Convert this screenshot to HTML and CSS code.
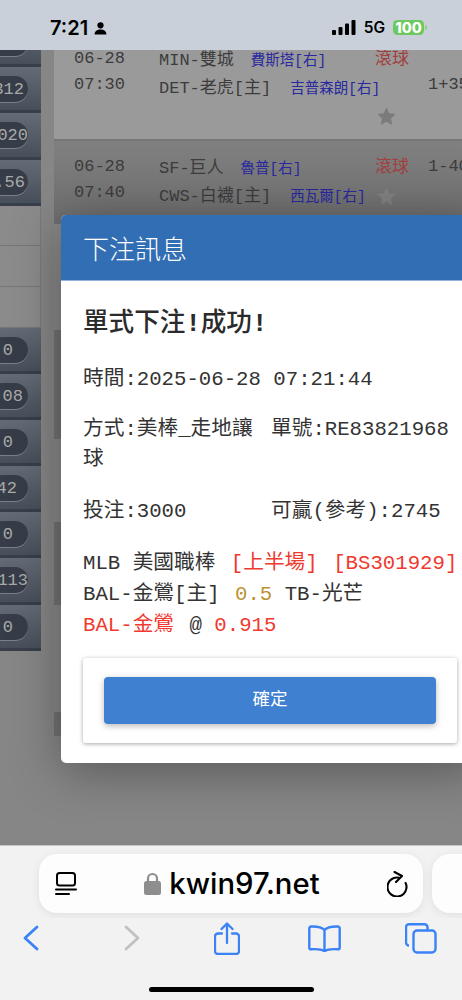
FILE: index.html
```html
<!DOCTYPE html>
<html lang="zh-Hant">
<head>
<meta charset="utf-8">
<title>下注訊息</title>
<link rel="stylesheet" href="styles.css">
</head>
<body>
<header class="status">
  <div class="clock">7:21
    <svg class="person" width="13" height="13" viewBox="0 0 13 13"><circle cx="6.5" cy="3.3" r="3.1"/><path d="M0.6 12.6c0-3.2 2.4-5 5.9-5s5.9 1.8 5.9 5z"/></svg>
  </div>
  <div class="indicators">
    <svg width="24" height="15" viewBox="0 0 24 15"><rect x="0" y="10" width="4" height="5" rx="1"/><rect x="6.500" y="7" width="4" height="8" rx="1"/><rect x="13" y="3.500" width="4" height="11.500" rx="1"/><rect x="19.500" y="0" width="4" height="15" rx="1"/></svg>
    <span class="net">5G</span>
    <span class="battery">100</span>
  </div>
</header>

<main class="screen">
  <aside class="side">
    <div class="cell"><span class="pill"></span></div>
    <div class="cell"><span class="pill e4">312</span></div>
    <div class="cell"><span class="pill">020</span></div>
    <div class="cell"><span class="pill e3">1.56</span></div>
    <div class="blank"></div>
    <div class="blank"></div>
    <div class="blank"></div>
    <div class="cell"><span class="pill e15">0</span></div>
    <div class="cell"><span class="pill e5">1.08</span></div>
    <div class="cell"><span class="pill e15">0</span></div>
    <div class="cell"><span class="pill e11">42</span></div>
    <div class="cell"><span class="pill e15">0</span></div>
    <div class="cell"><span class="pill">113</span></div>
    <div class="cell"><span class="pill e15">0</span></div>
  </aside>

  <section class="games">
    <article class="game first">
      <div class="when">06-28<br>07:30</div>
      <div class="teams">
        <div class="team">MIN-雙城<span class="pitcher p1">費斯塔[右]</span></div>
        <div class="team">DET-老虎[主]<span class="pitcher p2">吉普森朗[右]</span></div>
      </div>
      <div class="state">
        <div class="live">滾球</div>
        <svg class="star low" width="19" height="18" viewBox="0 0 24 23"><path d="M12 0.500l3.500 7.600 8.300 1-6.100 5.700 1.600 8.200-7.300-4.100-7.300 4.100 1.600-8.200L.2 9.100l8.300-1z"/></svg>
      </div>
      <div class="score second">1+35</div>
    </article>
    <article class="game second-game">
      <div class="when">06-28<br>07:40</div>
      <div class="teams">
        <div class="team">SF-巨人<span class="pitcher p3">魯普[右]</span></div>
        <div class="team">CWS-白襪[主]<span class="pitcher p2">西瓦爾[右]</span></div>
      </div>
      <div class="state">
        <div class="live">滾球</div>
        <svg class="star" width="19" height="18" viewBox="0 0 24 23"><path d="M12 0.500l3.500 7.600 8.300 1-6.100 5.700 1.600 8.200-7.300-4.100-7.300 4.100 1.600-8.200L.2 9.100l8.300-1z"/></svg>
      </div>
      <div class="score">1-40</div>
    </article>
    <div class="strip light h106"></div>
    <div class="strip dark h109"></div>
    <div class="strip light h83"></div>
    <div class="strip dark h83"></div>
    <div class="strip light h107"></div>
    <div class="strip dark h24"></div>
  </section>

  <div class="modal" role="dialog">
    <div class="modal-head">下注訊息</div>
    <div class="modal-body">
      <h2 class="result">單式下注<span class="bang">!</span>成功<span class="bang">!</span></h2>
      <p class="line gap-time">時間:2025-06-28 07:21:44</p>
      <div class="pair gap-way">
        <span>方式:美棒_走地讓球</span>
        <span>單號:RE83821968</span>
      </div>
      <div class="pair gap-bet">
        <span>投注:3000</span>
        <span>可贏(參考):2745</span>
      </div>
      <div class="slip">
        <div>MLB 美國職棒 <span class="red mark">[上半場]</span> <span class="red mark">[BS301929]</span></div>
        <div>BAL-金鶯[主] <span class="gold mark">0.5</span> TB-光芒</div>
        <div><span class="red">BAL-金鶯</span> <span class="mark">@</span> <span class="red">0.915</span></div>
      </div>
      <div class="actions"><button class="ok" type="button">確定</button></div>
    </div>
  </div>
</main>

<footer class="browser">
  <div class="tabs-row">
    <div class="url">
      <svg class="tablist" width="22" height="25" viewBox="0 0 22 25" fill="none" stroke="#000" stroke-width="2" stroke-linecap="round"><rect x="2" y="2" width="18" height="12.500" rx="2.500"/><path d="M1 18.500h20M1 23h13"/></svg>
      <div class="address">
        <svg width="17" height="23" viewBox="0 0 17 23"><path d="M4 10V6.500a4.500 4.500 0 0 1 9 0V10" fill="none" stroke="#8e8e8e" stroke-width="2.200"/><rect x="0" y="9" width="17" height="14" rx="2.500" fill="#8e8e8e"/></svg>
        <span class="host">kwin97.net</span>
      </div>
      <svg class="reload" width="22" height="26" viewBox="0 0 22 26" fill="none" stroke="#000" stroke-width="2.100" stroke-linecap="round" stroke-linejoin="round"><path d="M12 6.700A9.500 9.500 0 1 0 18.600 12"/><path d="M7.500 1L15 5l-6 6"/></svg>
    </div>
    <div class="url-next"></div>
  </div>
  <nav class="tools">
    <svg width="16" height="26" viewBox="0 0 16 26" fill="none" stroke="#3b82f6" stroke-width="2.800" stroke-linecap="round" stroke-linejoin="round"><path d="M14 2L2 13l12 11"/></svg>
    <svg class="fwd" width="16" height="26" viewBox="0 0 16 26" fill="none" stroke="#c0c0c0" stroke-width="2.800" stroke-linecap="round" stroke-linejoin="round"><path d="M2 2l12 11L2 24"/></svg>
    <svg class="nudge" width="26" height="33" viewBox="0 0 26 33" fill="none" stroke="#3b82f6" stroke-width="2.300" stroke-linecap="round" stroke-linejoin="round"><path d="M8 11.500H4a3 3 0 0 0-3 3V29a3 3 0 0 0 3 3h18a3 3 0 0 0 3-3V14.500a3 3 0 0 0-3-3h-4"/><path d="M13 21V2M7.500 7L13 1.500 18.500 7"/></svg>
    <svg class="nudge" width="33" height="27" viewBox="0 0 33 27" fill="none" stroke="#3b82f6" stroke-width="2.400" stroke-linecap="round" stroke-linejoin="round"><path d="M16.500 5C14 2.300 10 1.300 3.500 1.500 2 1.600 1.300 2.400 1.300 3.500V23c0 .8.700 1.400 1.600 1.300 6-.5 10.600-.2 13.600 2 3-2.200 7.600-2.500 13.600-2 .9.100 1.600-.5 1.600-1.300V3.500c0-1.100-.7-1.900-2.200-2C23 1.300 19 2.300 16.500 5zM16.500 5v21"/></svg>
    <svg width="32" height="31" viewBox="0 0 32 31" fill="none" stroke="#3b82f6" stroke-width="2.400" stroke-linejoin="round"><path d="M4 22.500a3 3 0 0 1-3-3V4.200a3 3 0 0 1 3-3h15.500a3 3 0 0 1 3 3V7"/><rect x="8.500" y="7.500" width="22" height="22" rx="3.500"/></svg>
  </nav>
  <div class="home"></div>
</footer>
</body>
</html>
```

FILE: styles.css
```css
* { box-sizing: border-box; }
html, body { margin: 0; padding: 0; }
body {
  width: 462px;
  height: 1000px;
  overflow: hidden;
  display: flex;
  flex-direction: column;
  background: #f2f2f2;
  font-family: "Liberation Mono", "Noto Sans CJK TC", monospace;
}

/* status bar */
.status {
  height: 50px;
  flex: none;
  display: flex;
  justify-content: space-between;
  background: #c9d0da;
  color: #000;
  padding: 18px 38px 0 50px;
  font-family: Inter, "Liberation Sans", sans-serif;
}
.clock { font-size: 20px; font-weight: 600; line-height: 20px; display: flex; gap: 6px; align-items: center; height: 20px; }
.person { margin-top: 1px; }
.indicators { display: flex; align-items: center; height: 18px; }
.net { font-size: 15.500px; font-weight: 600; margin: 0 8px; }
.battery {
  width: 31px;
  height: 15px;
  border-radius: 4.500px;
  background: #6dc95f;
  color: #fff;
  font-size: 14.500px;
  font-weight: 800;
  line-height: 15px;
  text-align: center;
  position: relative;
}
.battery::after {
  content: "";
  position: absolute;
  right: -3px;
  top: 5px;
  width: 2px;
  height: 5px;
  border-radius: 0 2px 2px 0;
  background: #86d67c;
}

/* dimmed page */
.screen {
  position: relative;
  height: 795px;
  flex: none;
  display: flex;
  overflow: hidden;
  background: #868686;
}
.side { width: 41px; flex: none; margin-top: -29px; }
.cell {
  height: 46.200px;
  padding-top: 9px;
  background: linear-gradient(#646b76, #474f5a);
  border-bottom: 3px solid #383f4a;
  overflow: hidden;
}
.pill {
  display: flex;
  justify-content: flex-end;
  width: 38px;
  height: 26px;
  margin-left: -10px;
  border-radius: 13px;
  background: #363d48;
  box-shadow: 0 1px 0 #79808a;
  color: #a9a9a9;
  font-size: 17px;
  line-height: 27px;
  white-space: nowrap;
}
.e3 { padding-right: 3px; }
.e4 { padding-right: 4px; }
.e5 { padding-right: 5px; }
.e11 { padding-right: 11px; }
.e15 { padding-right: 15px; }
.blank {
  height: 40.600px;
  background: #8b8b8b;
  border-bottom: 1px solid #767676;
  border-right: 1px solid #7a7a7a;
}

.games { margin-left: 13px; flex: 1; min-width: 0; margin-top: -5px; }
.game {
  display: grid;
  grid-template-columns: 85px 216px 53px 1fr;
  padding-left: 20px;
  color: #3c3c3c;
  font-size: 17px;
  line-height: 26px;
  white-space: nowrap;
  overflow: hidden;
}
.first { height: 96px; background: #9a9a9a; border-bottom: 2px solid #767676; }
.second-game { height: 83px; padding-top: 12px; background: linear-gradient(#808080, #6e6e6e); }
.when { padding-top: 1px; }
.teams { padding-top: 3px; }
.team { height: 27.500px; }
.pitcher { color: #28289f; font-size: 14.500px; }
.p1 { margin-left: 17px; }
.p2 { margin-left: 19px; }
.p3 { margin-left: 17px; }
.live { color: #a23f3f; font-size: 17px; padding-top: 2.500px; line-height: 24px; }
.star { display: block; fill: #808080; margin: 7px 0 0 2px; }
.star.low { fill: #7b7b7b; margin-top: 35.500px; }
.score { padding-top: 1px; }
.score.second { padding-top: 27px; }
.light { background: #888; }
.dark { background: #727272; }
.h106 { height: 106px; }
.h109 { height: 109px; }
.h83 { height: 83px; }
.h107 { height: 107px; }
.h24 { height: 24px; }

/* modal */
.modal {
  position: absolute;
  left: 61px;
  top: 165px;
  width: 420px;
  border-radius: 5px;
  background: #fff;
  box-shadow: 0 8px 50px rgba(0, 0, 0, .35);
  overflow: hidden;
  color: #333;
  font-size: 20.700px;
}
.modal-head {
  height: 66px;
  padding-left: 22px;
  background: #326eb3;
  border-bottom: 1px solid #8fb4de;
  color: #fff;
  font-family: "Noto Sans CJK TC", sans-serif;
  font-size: 26px;
  font-weight: 300;
  line-height: 66px;
}
.modal-body { padding: 29px 22px 20px; }
.result { margin: 0; font-size: 25.600px; font-weight: 500; line-height: 30px; color: #2b2b2b; }
.bang { font-weight: 700; }
.line { margin: 0; line-height: 30px; }
.gap-time { margin-top: 25px; }
.pair { display: grid; grid-template-columns: 188px 1fr; line-height: 30px; }
.gap-way { margin-top: 20px; }
.gap-bet { margin-top: 22px; }
.slip { margin-top: 21px; line-height: 31px; white-space: nowrap; }
.mark { margin-left: 3px; }
.red { color: #f0392f; }
.gold { color: #bd9133; }
.actions {
  width: 374px;
  height: 85px;
  margin-top: 17px;
  padding: 19px 21px;
  border-radius: 3px;
  background: #fff;
  box-shadow: 0 1px 4px rgba(0, 0, 0, .35);
}
.ok {
  display: block;
  width: 332px;
  height: 47px;
  border: 0;
  border-radius: 4px;
  background: #4080d0;
  box-shadow: 0 2px 6px rgba(0, 0, 0, .28);
  color: #fff;
  font-family: "Noto Sans CJK TC", sans-serif;
  font-size: 17.500px;
  font-weight: 400;
  padding: 0 0 7px;
}

/* browser chrome */
.browser {
  flex: 1;
  background: #f2f2f2;
  border-top: 1px solid #c6c6c6;
  display: flex;
  flex-direction: column;
}
.tabs-row { display: flex; gap: 9px; padding: 8px 0 0 39px; flex: none; overflow: hidden; height: 72px; }
.url, .url-next {
  height: 59px;
  border-radius: 18px;
  background: #fdfdfd;
  box-shadow: 0 2px 10px rgba(0, 0, 0, .08);
  flex: none;
}
.url { width: 384px; display: flex; align-items: center; justify-content: space-between; padding: 0 14px 0 16px; }
.url-next { width: 100px; }
.address { display: flex; align-items: center; gap: 8px; }
.address svg { margin-top: -1px; }
.host {
  color: #000;
  font-family: Inter, "Liberation Sans", sans-serif;
  font-weight: 500;
  font-size: 29.300px;
  line-height: 34px;
}
.tools {
  display: grid;
  grid-template-columns: repeat(5, 97.500px);
  justify-items: center;
  align-items: center;
  margin-left: -18px;
  height: 40px;
  flex: none;
}
.fwd { margin-left: 7px; }
.nudge { margin-left: 2px; }
.home {
  width: 165px;
  height: 5px;
  margin: 29px 0 0 149px;
  border-radius: 3px;
  background: #000;
  flex: none;
}
```
